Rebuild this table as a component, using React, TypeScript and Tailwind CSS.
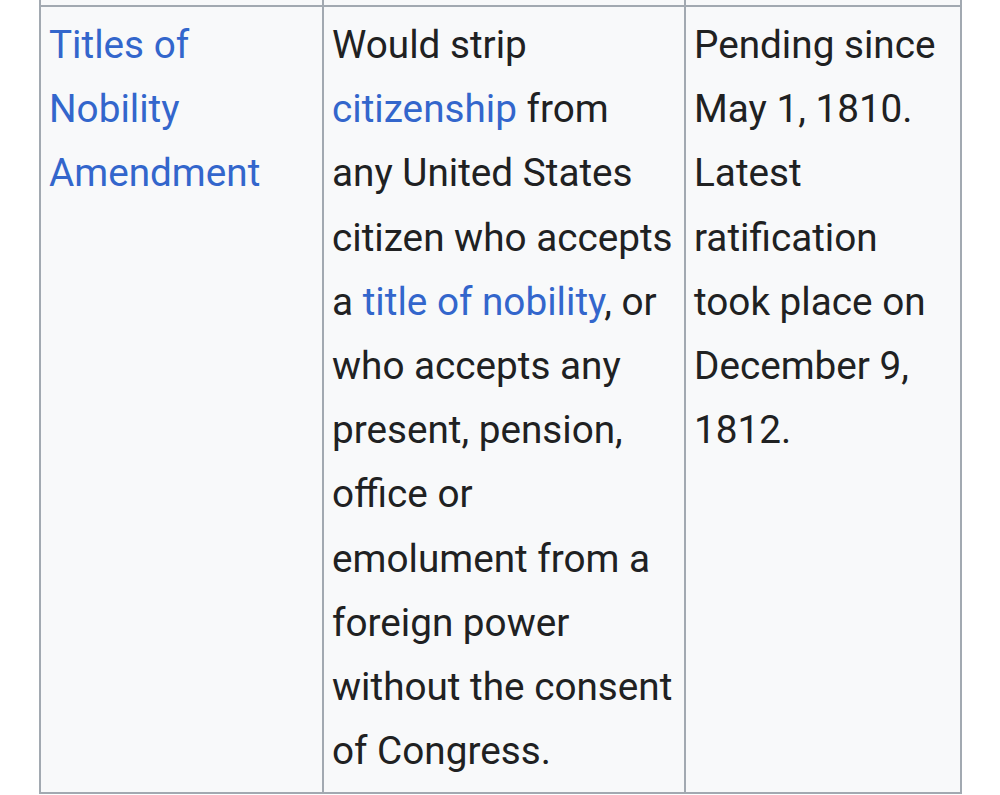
const cell = "border-2 border-[#a2a9b1] bg-[#f8f9fa] align-top px-[8px] pt-[6px] pb-[9px]";

function Link({ children }: { children: React.ReactNode }) {
  return <a className="text-[#3366cc] no-underline">{children}</a>;
}

export default function App() {
  return (
    <div className="min-h-[795px] w-[1000px] bg-white font-['Roboto',sans-serif] text-[38.7px] leading-[64.2px] text-[#202122]">
      <table className="ml-[39px] table-fixed border-collapse">
        <colgroup>
          <col className="w-[283px]" />
          <col className="w-[362px]" />
          <col className="w-[276px]" />
        </colgroup>
        <tbody>
          {/* tail of the previous row */}
          <tr className="h-[6px]">
            <td className="border-2 border-t-0 border-[#a2a9b1] bg-[#f8f9fa] p-0" />
            <td className="border-2 border-t-0 border-[#a2a9b1] bg-[#f8f9fa] p-0" />
            <td className="border-2 border-t-0 border-[#a2a9b1] bg-[#f8f9fa] p-0" />
          </tr>
          <tr>
            <td className={cell}>
              <Link>Titles of Nobility Amendment</Link>
            </td>
            <td className={cell}>
              Would strip <Link>citizenship</Link> from any United States citizen who accepts a{" "}
              <Link>title of nobility</Link>, or who accepts any present, pension, office or
              emolument from a foreign power without the consent of Congress.
            </td>
            <td className={cell}>
              Pending since May 1, 1810. Latest ratification took place on December 9, 1812.
            </td>
          </tr>
        </tbody>
      </table>
    </div>
  );
}
